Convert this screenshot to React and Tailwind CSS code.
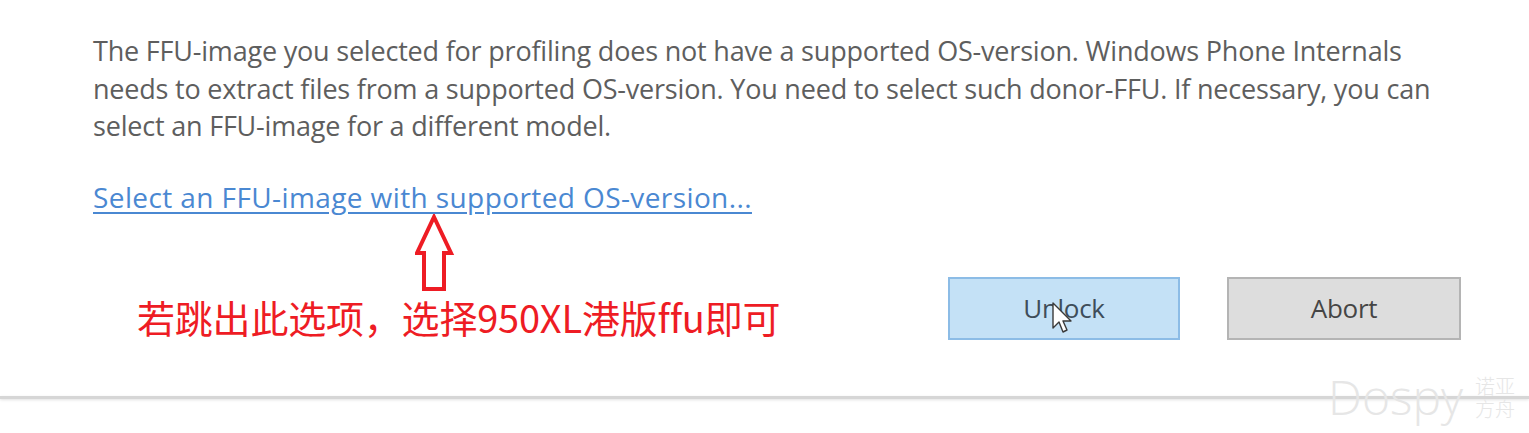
import { useState } from 'react';

function UpArrow() {
  return (
    <svg width="42" height="80" viewBox="0 0 42 80" className="block">
      <path
        d="M19 3 L36 39 L29 39 L29 75 L9 75 L9 39 L2 39 Z"
        fill="none"
        stroke="#ee1c24"
        strokeWidth="4"
        strokeLinejoin="miter"
      />
    </svg>
  );
}

function Cursor() {
  return (
    <svg width="24" height="36" viewBox="0 0 24 36" className="absolute left-[1052px] top-[302px]">
      <path
        d="M1 1 L1 26 L7 20 L11 30 L15 28 L11 19 L19 19 Z"
        fill="#ffffff"
        stroke="#3a3a3a"
        strokeWidth="1.4"
        strokeLinejoin="round"
      />
    </svg>
  );
}

export default function App() {
  const [choice, setChoice] = useState(null);

  return (
    <div className="relative w-[1529px] h-[433px] overflow-hidden bg-white font-['Open_Sans',sans-serif]">
      <div className="pl-[93px] pt-[32px]">
        <p className="text-[27px] leading-[37.5px] text-[#5e5e5e] tracking-[-0.2px] whitespace-nowrap">
          The FFU-image you selected for profiling does not have a supported OS-version. Windows Phone Internals
          <br />
          needs to extract files from a supported OS-version. You need to select such donor-FFU. If necessary, you can
          <br />
          select an FFU-image for a different model.
        </p>
        <a
          href="#"
          className="inline-block mt-[36px] text-[28px] leading-[32px] text-[#4a88d2] underline decoration-[#4a88d2] underline-offset-[4px] tracking-[0.4px]"
        >
          Select an FFU-image with supported OS-version...
        </a>
      </div>

      <div className="flex justify-between items-start pl-[137px] pr-[68px]">
        <div className="flex flex-col">
          <div className="ml-[278px]">
            <UpArrow />
          </div>
          <div className="text-[38px] leading-[46px] text-[#ee1c24] font-['Noto_Sans_CJK_SC',sans-serif] tracking-[-0.2px]">
            若跳出此选项，选择950XL港版ffu即可
          </div>
        </div>
        <div className="flex gap-[47px] mt-[63px]">
          <button
            onClick={() => setChoice('unlock')}
            className="w-[232px] h-[63px] bg-[#c4e1f6] border-2 border-[#8cbce6] text-[26px] text-[#3e4d5a] tracking-[-0.3px]"
          >
            Unlock
          </button>
          <button
            onClick={() => setChoice('abort')}
            className="w-[234px] h-[63px] bg-[#dddddd] border-2 border-[#b4b4b4] text-[26px] text-[#454545] tracking-[-0.3px]"
          >
            Abort
          </button>
        </div>
      </div>

      <div className="absolute left-0 right-0 top-[396px] h-[3px] bg-[#d6d6d6] shadow-[0_1px_3px_rgba(0,0,0,0.12)]" />

      <div className="absolute left-[1328px] top-[370px] flex items-center gap-[12px] text-[#e6e6e6]">
        <span className="text-[48px] leading-[54px] font-['Open_Sans',sans-serif] font-light">Dospy</span>
        <span className="block text-[20px] leading-[23px] font-['Noto_Sans_CJK_SC',sans-serif] font-light">
          诺亚
          <br />
          方舟
        </span>
      </div>

      <Cursor />
      {choice && <span className="sr-only">{choice}</span>}
    </div>
  );
}
